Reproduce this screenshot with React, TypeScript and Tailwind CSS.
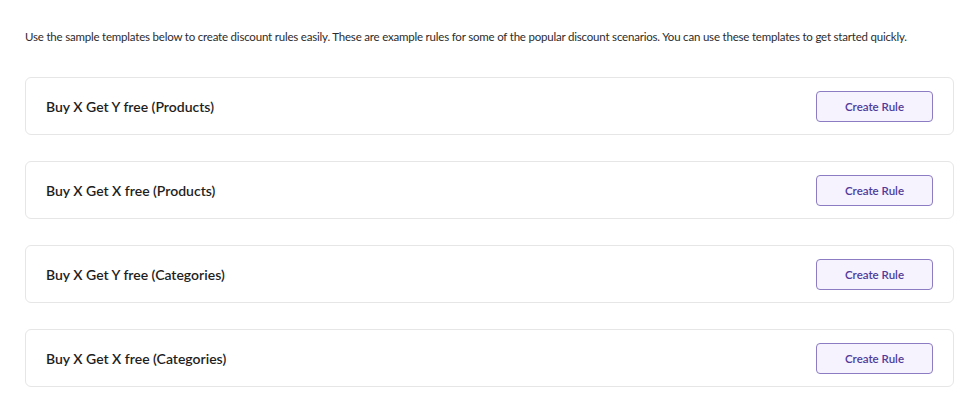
import React from "react";

const rules = [
  "Buy X Get Y free (Products)",
  "Buy X Get X free (Products)",
  "Buy X Get Y free (Categories)",
  "Buy X Get X free (Categories)",
];

export default function App() {
  return (
    <div
      className="w-[978px] h-[398px] bg-white pl-[25px] pr-[24px] pt-[29px]"
      style={{ fontFamily: 'Lato, "Noto Sans", Arial, sans-serif' }}
    >
      <p className="text-[11.5px] leading-[16px] text-[#2c2c2c] whitespace-nowrap tracking-[-0.2px]">
        Use the sample templates below to create discount rules easily. These are example rules for some of the popular discount scenarios. You can use these templates to get started quickly.
      </p>
      <div className="mt-[32px] flex flex-col gap-[26px]">
        {rules.map((r) => (
          <div
            key={r}
            className="h-[58px] flex items-center justify-between border border-[#e6e6e6] rounded-[6px] pl-[20px] pr-[20px]"
          >
            <span className="text-[14px] leading-[18px] pt-[2px] font-semibold text-[#1e1e1e]">{r}</span>
            <button className="w-[117px] h-[31px] rounded-[4px] border border-[#8c7cc4] bg-[#f6f2fe] text-[11.5px] pt-[1px] font-semibold text-[#4f3a9a]">
              Create Rule
            </button>
          </div>
        ))}
      </div>
    </div>
  );
}
